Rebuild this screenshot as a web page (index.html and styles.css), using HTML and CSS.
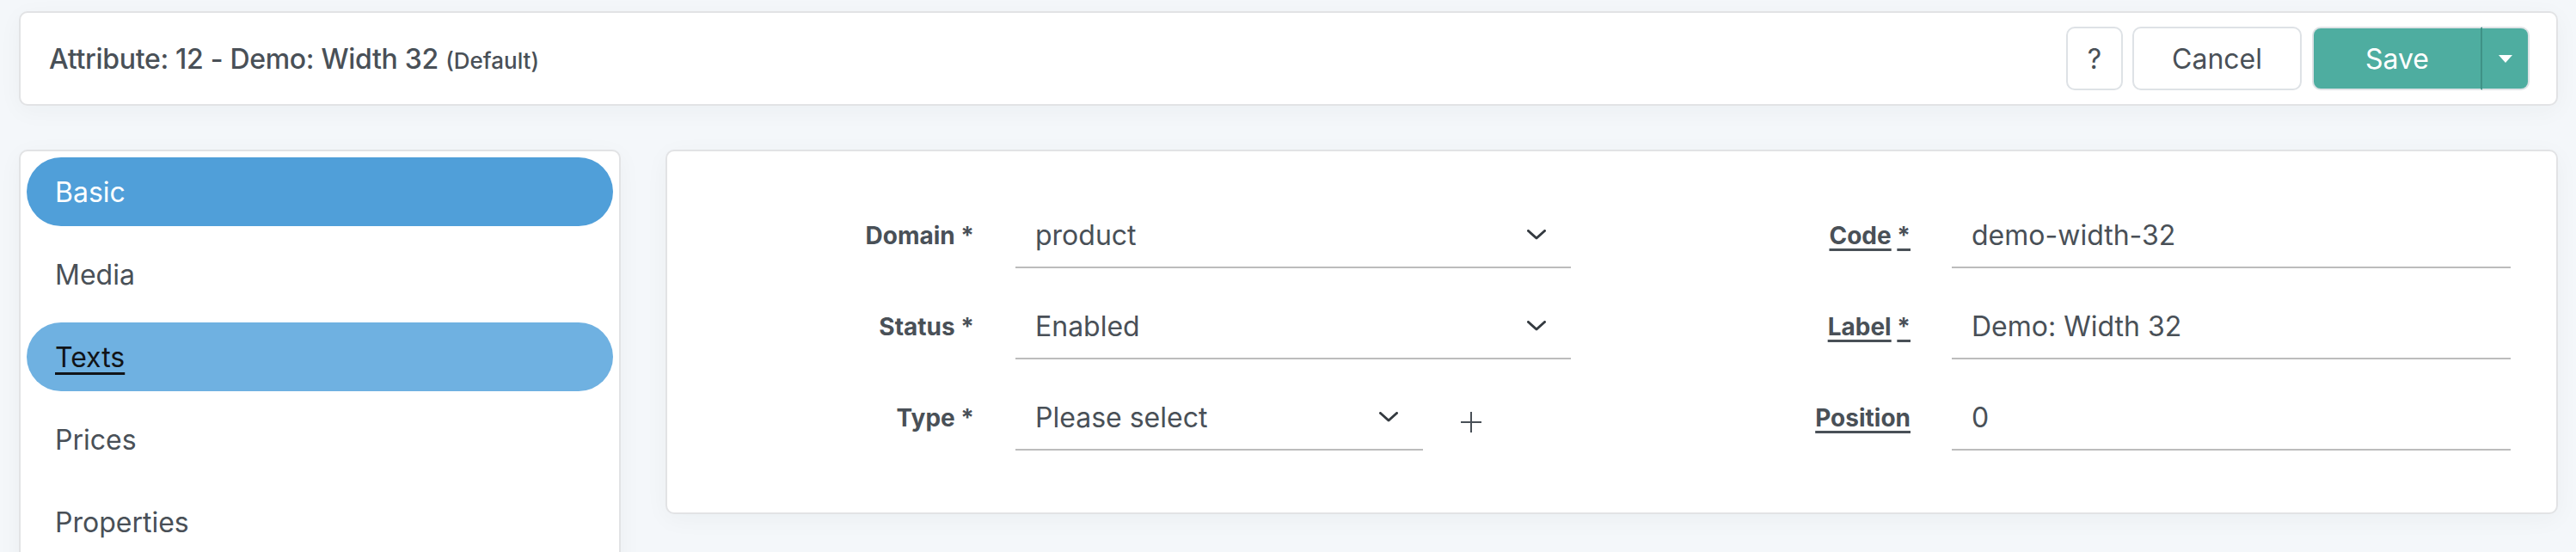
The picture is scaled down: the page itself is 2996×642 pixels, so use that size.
FILE: index.html
```html
<!DOCTYPE html>
<html lang="en">
<head>
<meta charset="utf-8">
<title>Attribute: 12 - Demo: Width 32</title>
<link rel="stylesheet" href="styles.css">
</head>
<body>
<header class="card titlebar">
  <h1 class="title">Attribute: 12 - Demo: Width 32 <small class="title-note">(Default)</small></h1>
  <div class="actions">
    <button class="btn btn-light btn-help" type="button">?</button>
    <button class="btn btn-light btn-cancel" type="button">Cancel</button>
    <div class="btn-group">
      <button class="btn btn-save" type="button">Save</button>
      <button class="btn btn-caret" type="button" aria-label="More"><span class="caret"></span></button>
    </div>
  </div>
</header>

<div class="content">
  <nav class="card sidebar">
    <a class="nav-item active">Basic</a>
    <a class="nav-item">Media</a>
    <a class="nav-item hover">Texts</a>
    <a class="nav-item">Prices</a>
    <a class="nav-item">Properties</a>
  </nav>

  <section class="card form-card">
    <div class="form-grid">
      <div class="form-row">
        <label class="form-label">Domain *</label>
        <div class="field select">
          <span class="value">product</span>
          <svg class="chevron" viewBox="0 0 22 12" width="22" height="12"><polyline points="1.5,1.5 11,10 20.5,1.5"/></svg>
        </div>
      </div>
      <div class="form-row">
        <label class="form-label"><span class="u">Code</span> <span class="u">*</span></label>
        <div class="field"><span class="value">demo-width-32</span></div>
      </div>
      <div class="form-row">
        <label class="form-label">Status *</label>
        <div class="field select">
          <span class="value">Enabled</span>
          <svg class="chevron" viewBox="0 0 22 12" width="22" height="12"><polyline points="1.5,1.5 11,10 20.5,1.5"/></svg>
        </div>
      </div>
      <div class="form-row">
        <label class="form-label"><span class="u">Label</span> <span class="u">*</span></label>
        <div class="field"><span class="value">Demo: Width 32</span></div>
      </div>
      <div class="form-row">
        <label class="form-label">Type *</label>
        <div class="field-group">
          <div class="field select type-select">
            <span class="value">Please select</span>
            <svg class="chevron" viewBox="0 0 22 12" width="22" height="12"><polyline points="1.5,1.5 11,10 20.5,1.5"/></svg>
          </div>
          <svg class="plus" viewBox="0 0 24 24" width="24" height="24"><line x1="12" y1="0" x2="12" y2="24"/><line x1="0" y1="12" x2="24" y2="12"/></svg>
        </div>
      </div>
      <div class="form-row">
        <label class="form-label"><span class="u">Position</span></label>
        <div class="field"><span class="value">0</span></div>
      </div>
    </div>
  </section>
</div>
</body>
</html>
```
FILE: styles.css
```css
html {
  overflow: hidden;
}

body {
  margin: 0;
  padding: 13px 21px 0 22px;
  background: #f4f7fa;
  font-family: "Inter", "Liberation Sans", sans-serif;
  color: #495057;
}

.card {
  background: #ffffff;
  border: 2px solid #e2e3e5;
  border-radius: 10px;
  box-shadow: 0 6px 28px rgba(30, 40, 60, 0.04);
  box-sizing: border-box;
}

/* ---------- title bar ---------- */
.titlebar {
  height: 110px;
  display: flex;
  align-items: center;
  justify-content: space-between;
  padding: 0 31px 0 33px;
}

.title {
  margin: 0;
  font-size: 32px;
  font-weight: 500;
  color: #495057;
  letter-spacing: -0.3px;
}

.title-note {
  font-size: 26px;
  font-weight: 500;
  letter-spacing: 0;
}

.actions {
  display: flex;
  align-items: center;
  gap: 11px;
}

.btn {
  height: 74px;
  box-sizing: border-box;
  border: 2px solid #dee2e6;
  border-radius: 10px;
  background: #fff;
  color: #495057;
  font-family: inherit;
  font-size: 32px;
  padding: 0;
  cursor: pointer;
}

.btn-help {
  width: 66px;
}

.btn-cancel {
  width: 197px;
}

.btn-group {
  display: flex;
  margin-left: 1px;
}

.btn-save {
  width: 198px;
  background: #4eada0;
  border-color: #dfe3e6;
  border-right: 2px solid #3f9186;
  border-radius: 10px 0 0 10px;
  color: #fff;
}

.btn-caret {
  width: 55px;
  background: #4eada0;
  border-color: #dfe3e6;
  border-left: none;
  border-radius: 0 10px 10px 0;
  display: flex;
  align-items: center;
  justify-content: center;
}

.caret {
  width: 0;
  height: 0;
  border-left: 8px solid transparent;
  border-right: 8px solid transparent;
  border-top: 9px solid #fff;
}

/* ---------- content ---------- */
.content {
  display: flex;
  align-items: flex-start;
  gap: 52px;
  margin-top: 51px;
}

.sidebar {
  width: 700px;
  flex: 0 0 700px;
  padding: 7px 7px 60px 7px;
  display: flex;
  flex-direction: column;
  gap: 16px;
}

.nav-item {
  display: flex;
  align-items: center;
  height: 80px;
  border-radius: 40px;
  padding-left: 33px;
  font-size: 32px;
  color: #495057;
}

.nav-item.active {
  background: #509fd9;
  color: #ffffff;
}

.nav-item.hover {
  background: #6fb1e1;
  color: #111418;
  text-decoration: underline;
  text-underline-offset: 6px;
  text-decoration-thickness: 3px;
}

.form-card {
  flex: 1;
  height: 424px;
  padding: 60px 0 0 0;
}

.form-grid {
  display: grid;
  grid-template-columns: 1089px 1fr;
  row-gap: 30px;
  padding-left: 4px;
}

.form-row {
  display: grid;
  grid-template-columns: 353px 1fr;
  column-gap: 48px;
  align-items: center;
}

.form-row:nth-child(odd) {
  padding-right: 42px;
}

.form-row:nth-child(even) {
  padding-right: 53px;
}

.form-label {
  text-align: right;
  font-size: 28px;
  font-weight: 700;
  color: #495057;
}

.form-label .u {
  text-decoration: underline;
  text-underline-offset: 5px;
  text-decoration-thickness: 3px;
}

.field {
  height: 76px;
  box-sizing: border-box;
  border-bottom: 2px solid #bcbcbc;
  display: flex;
  align-items: center;
  justify-content: space-between;
  padding: 0 29px 0 23px;
  font-size: 32px;
  color: #495057;
}

.chevron {
  fill: none;
  stroke: #343a40;
  stroke-width: 3;
  stroke-linecap: round;
  stroke-linejoin: round;
}

.field-group {
  display: flex;
  align-items: center;
}

.type-select {
  flex: 0 0 474px;
}

.plus {
  margin-left: 44px;
  margin-top: 10px;
  stroke: #495057;
  stroke-width: 2;
}
```
